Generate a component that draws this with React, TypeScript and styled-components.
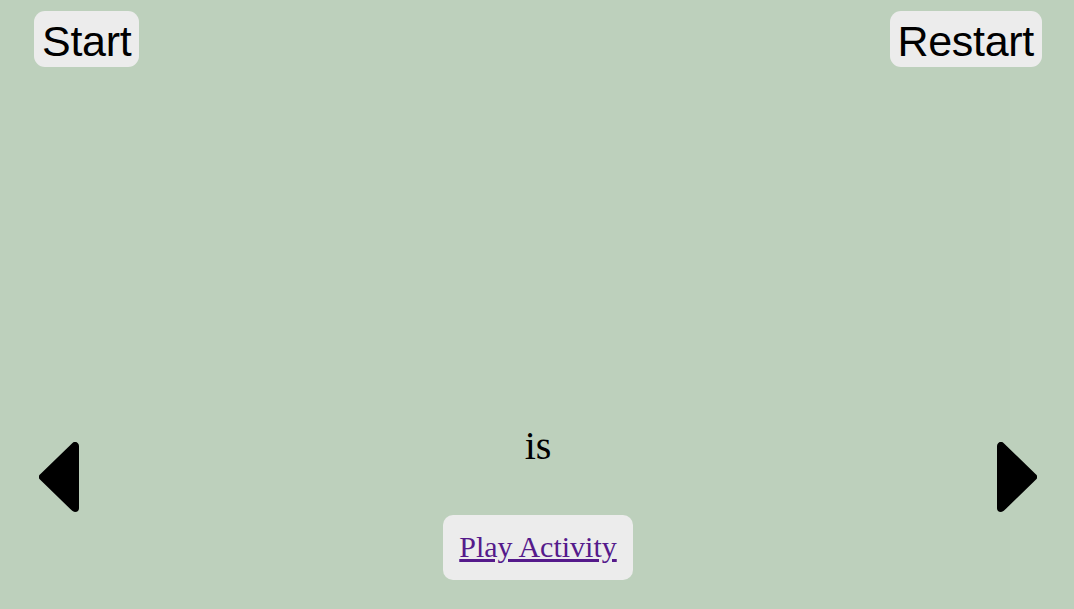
import * as React from 'react'
import styled, { createGlobalStyle } from 'styled-components'

const GlobalStyle = createGlobalStyle`
  html, body {
    margin: 0;
    padding: 0;
    background: #bdd0bc;
  }
`

const Page = styled.div`
  box-sizing: border-box;
  height: 100vh;
  display: flex;
  flex-direction: column;
  padding: 11px 32px 29px 34px;
`

const TopBar = styled.div`
  display: flex;
  justify-content: space-between;
  align-items: flex-start;
`

const TopButton = styled.button`
  font-family: 'Liberation Sans', Arial, sans-serif;
  font-size: 43px;
  letter-spacing: -0.3px;
  line-height: 46px;
  color: #000;
  background: #ececec;
  border: none;
  border-radius: 11px;
  padding: 7px 8px 3px;
  cursor: pointer;
`

const Spacer = styled.div`
  flex: 1;
`

const BottomRow = styled.div`
  display: grid;
  grid-template-columns: 1fr auto 1fr;
  align-items: end;
`

const ArrowButton = styled.button<{ side: 'left' | 'right' }>`
  justify-self: ${({ side }) => (side === 'left' ? 'start' : 'end')};
  margin: 0 5px 68px;
  padding: 0;
  border: none;
  background: none;
  display: flex;
  cursor: pointer;
`

const Center = styled.div`
  display: flex;
  flex-direction: column;
  align-items: center;
`

const Word = styled.div`
  font-family: 'Liberation Serif', 'Times New Roman', serif;
  font-size: 40px;
  line-height: 46px;
  color: #000;
  margin-bottom: 46px;
`

const PlayButton = styled.div`
  background: #ececec;
  border-radius: 10px;
  padding: 15px 16px 16px;
  font-family: 'Liberation Serif', 'Times New Roman', serif;
  font-size: 30px;
  line-height: 34px;
`

const PlayLink = styled.a`
  color: #551a8b;
  text-decoration: underline;
`

const Arrow = ({ dir }: { dir: 'left' | 'right' }) => (
  <svg width={40} height={70} viewBox="0 0 40 70">
    <polygon
      points={dir === 'left' ? '36,4 36,66 4,35' : '4,4 4,66 36,35'}
      fill="#000"
      stroke="#000"
      strokeWidth={8}
      strokeLinejoin="round"
    />
  </svg>
)

export default function App() {
  return (
    <>
      <GlobalStyle />
      <Page>
        <TopBar>
          <TopButton>Start</TopButton>
          <TopButton>Restart</TopButton>
        </TopBar>
        <Spacer />
        <BottomRow>
          <ArrowButton side="left" aria-label="Previous">
            <Arrow dir="left" />
          </ArrowButton>
          <Center>
            <Word>is</Word>
            <PlayButton>
              <PlayLink href="#">Play Activity</PlayLink>
            </PlayButton>
          </Center>
          <ArrowButton side="right" aria-label="Next">
            <Arrow dir="right" />
          </ArrowButton>
        </BottomRow>
      </Page>
    </>
  )
}
